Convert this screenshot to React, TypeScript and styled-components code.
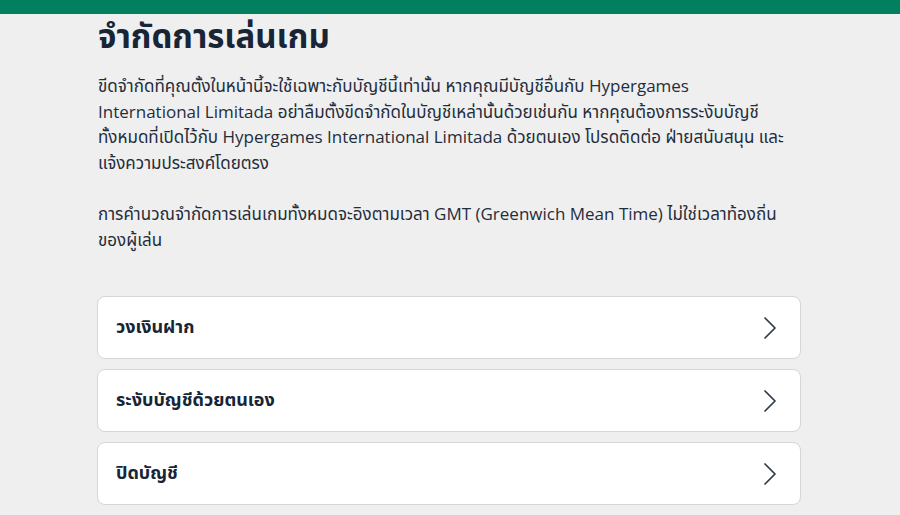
import React from 'react';
import styled, { createGlobalStyle } from 'styled-components';

const GlobalStyle = createGlobalStyle`
    html, body {
        margin: 0;
        padding: 0;
        background: #efefef;
    }
    body {
        font-family: 'Open Sans', 'Noto Sans', 'Noto Sans Thai', Tahoma, sans-serif;
        color: #1b2a3a;
    }
`;

const TopBar = styled.div`
    height: 14px;
    background-color: #027f5f;
`;

const Content = styled.main`
    width: 704px;
    margin-left: 97px;
    padding-top: 2px;
`;

const Title = styled.h1`
    margin: 0 0 0 1px;
    font-size: 33px;
    line-height: 40px;
    font-weight: 700;
    color: #172536;
`;

const Paragraph = styled.p`
    margin: 0 0 0 1px;
    font-size: 17px;
    line-height: 25.5px;
    color: #1f2d3d;
    white-space: nowrap;
`;

const Intro = styled(Paragraph)`
    margin-top: 17px;
`;

const Note = styled(Paragraph)`
    margin-top: 26px;
`;

const List = styled.div`
    display: flex;
    flex-direction: column;
    gap: 10px;
    margin-top: 44px;
`;

const Card = styled.button`
    all: unset;
    box-sizing: border-box;
    display: flex;
    align-items: center;
    justify-content: space-between;
    height: 63px;
    padding: 0 20px 0 18px;
    background: #ffffff;
    border: 1px solid #d6d6d6;
    border-radius: 8px;
    cursor: pointer;
`;

const CardLabel = styled.span`
    font-size: 18px;
    font-weight: 700;
    color: #172536;
`;

const Chevron = () => (
    <svg width="20" height="22" viewBox="0 0 20 22" fill="none">
        <path d="M5 1 L15 11 L5 21" stroke="#2b3a4a" strokeWidth="1.7" strokeLinecap="round" strokeLinejoin="round" />
    </svg>
);

const items = ['วงเงินฝาก', 'ระงับบัญชีด้วยตนเอง', 'ปิดบัญชี'];

const App = () => (
    <>
        <GlobalStyle />
        <TopBar />
        <Content>
            <Title>จำกัดการเล่นเกม</Title>
            <Intro>
                ขีดจำกัดที่คุณตั้งในหน้านี้จะใช้เฉพาะกับบัญชีนี้เท่านั้น หากคุณมีบัญชีอื่นกับ Hypergames
                <br />
                International Limitada อย่าลืมตั้งขีดจำกัดในบัญชีเหล่านั้นด้วยเช่นกัน หากคุณต้องการระงับบัญชี
                <br />
                ทั้งหมดที่เปิดไว้กับ Hypergames International Limitada ด้วยตนเอง โปรดติดต่อ ฝ่ายสนับสนุน และ
                <br />
                แจ้งความประสงค์โดยตรง
            </Intro>
            <Note>
                การคำนวณจำกัดการเล่นเกมทั้งหมดจะอิงตามเวลา GMT (Greenwich Mean Time) ไม่ใช่เวลาท้องถิ่น
                <br />
                ของผู้เล่น
            </Note>
            <List>
                {items.map((label) => (
                    <Card key={label}>
                        <CardLabel>{label}</CardLabel>
                        <Chevron />
                    </Card>
                ))}
            </List>
        </Content>
    </>
);

export default App;
